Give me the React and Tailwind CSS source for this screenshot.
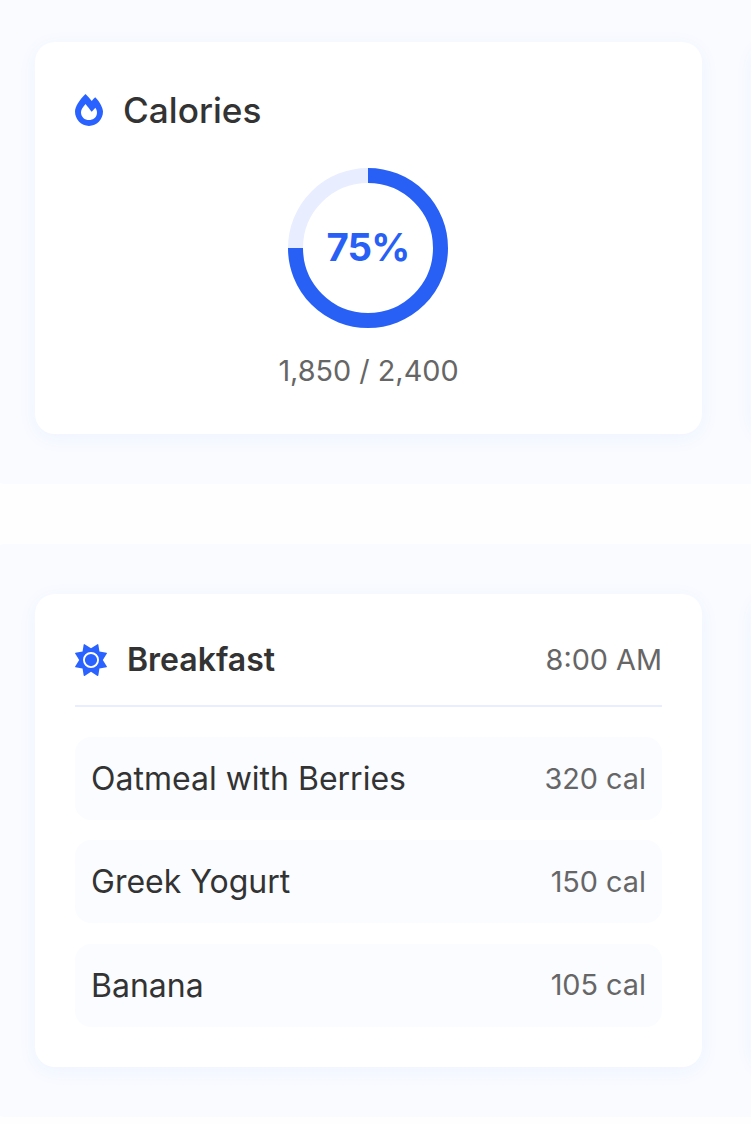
import React from "react";

const meals = [
  { name: "Oatmeal with Berries", calories: "320 cal" },
  { name: "Greek Yogurt", calories: "150 cal" },
  { name: "Banana", calories: "105 cal" },
];

function FireIcon({ className }) {
  return (
    <svg className={className} viewBox="0 0 448 512" fill="currentColor" aria-hidden="true">
      <path d="M323.5 51.25C302.8 70.5 284 90.75 267.4 111.1C240.1 73.62 206.2 35.5 168 0C69.75 91.17 0 210 0 281.6C0 408.9 100.2 512 224 512s224-103.1 224-230.4C448 228.4 396 118.5 323.5 51.25zM304.1 391.9C282.4 407 255.8 416 226.9 416c-72.13 0-130.9-47.73-130.9-125.2c0-38.63 24.24-72.64 72.74-130.8c7 8 98.88 125.3 98.88 125.3l58.63-66.88c4.125 6.75 7.867 13.52 11.24 19.95C364.9 290.6 353.4 357.4 304.1 391.9z" />
    </svg>
  );
}

function SunIcon({ className }) {
  return (
    <svg className={className} viewBox="0 0 512 512" fill="currentColor" aria-hidden="true">
      <path d="M256 158a98 98 0 1 0 0 196a98 98 0 1 0 0-196zM256 67L359 2Q370-3 373 8L391 121L504 139Q515 142 510 153L445 256L510 359Q515 370 504 373L391 391L373 504Q370 515 359 510L256 445L153 510Q142 515 139 504L121 391L8 373Q-3 370 2 359L67 256L2 153Q-3 142 8 139L121 121L139 8Q142-3 153 2zM256 384a128 128 0 1 1 0-256a128 128 0 1 1 0 256z" fillRule="evenodd" />
    </svg>
  );
}

function Panel({ className, children }) {
  return (
    <section className={`-ml-[15px] flex w-[1600px] shrink-0 gap-[50px] bg-[#f9fbff] pl-[50px] ${className}`}>
      {children}
      <div className="w-[667px] shrink-0 rounded-[20px] bg-white shadow-[0_4px_20px_rgba(41,98,255,0.05)]" />
    </section>
  );
}

function Card({ className, children }) {
  return (
    <article className={`w-[667px] shrink-0 rounded-[20px] bg-white px-10 shadow-[0_4px_20px_rgba(41,98,255,0.05)] ${className}`}>
      {children}
    </article>
  );
}

function ProgressRing() {
  return (
    <div className="ml-[213px] grid size-40 place-items-center">
      <svg className="col-start-1 row-start-1 size-40 -rotate-90" viewBox="0 0 160 160" fill="none">
        <circle cx="80" cy="80" r="72.5" stroke="#e8eeff" strokeWidth="15" />
        <circle cx="80" cy="80" r="72.5" stroke="#2860f5" strokeWidth="15" pathLength="100" strokeDasharray="75 25" />
      </svg>
      <span className="col-start-1 row-start-1 pb-[3px] text-[38.4px] leading-[48px] font-bold tracking-[-0.8px] text-[#2860f5]">75%</span>
    </div>
  );
}

export default function App() {
  return (
    <main className="h-[1124px] w-[751px] overflow-hidden bg-[#fefefe] font-['Inter',sans-serif] text-[#333333]">
      <Panel className="h-[484px] rounded-b-[20px] pt-[42px] pb-[50px]">
        <Card className="pt-10">
          <h2 className="flex h-14 items-center gap-5 text-[35.2px] font-medium">
            <FireIcon className="h-8 w-7 text-[#2962ff]" />
            <span>Calories</span>
          </h2>
          <div className="pt-[30px]">
            <ProgressRing />
          </div>
          <p className="pt-5 text-center text-[28.8px] leading-[46px] text-[#666666]">1,850 / 2,400</p>
        </Card>
      </Panel>

      <Panel className="mt-[60px] h-[573px] rounded-[20px] py-[50px]">
        <Card className="pt-10">
          <header className="flex h-[73px] items-start justify-between border-b-2 border-[#e8eeff]">
            <h3 className="flex h-[52px] items-center gap-5 text-[32px] font-semibold">
              <SunIcon className="size-8 text-[#2962ff]" />
              <span>Breakfast</span>
            </h3>
            <time className="text-[28.8px] leading-[52px] text-[#666666]">8:00 AM</time>
          </header>
          <ul className="flex flex-col gap-[20.6px] pt-[30px]">
            {meals.map((meal) => (
              <li key={meal.name} className="flex h-[82.8px] items-center justify-between rounded-2xl bg-[#fafcff] px-4">
                <span className="pt-[0.2px] text-[32px] leading-[51.2px]">{meal.name}</span>
                <span className="pt-[0.4px] text-[28.8px] leading-[46px] text-[#666666]">{meal.calories}</span>
              </li>
            ))}
          </ul>
        </Card>
      </Panel>
    </main>
  );
}
